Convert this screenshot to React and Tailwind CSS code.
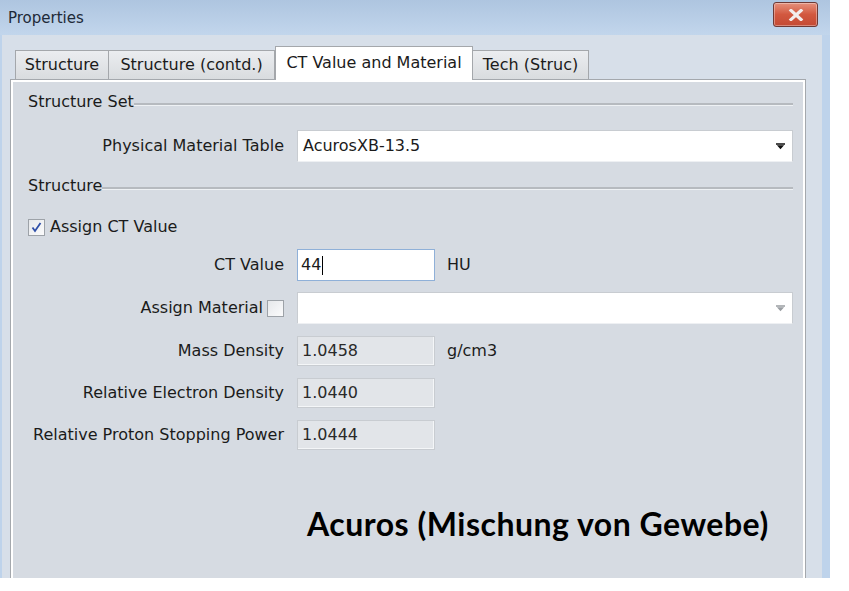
import React from 'react';

const ui = { fontFamily: '"DejaVu Sans", Tahoma, sans-serif' };

function Label({ children }) {
  return (
    <div className="w-[256px] shrink-0 text-right text-[16px] text-[#1b1b1b] whitespace-nowrap">
      {children}
    </div>
  );
}

function Separator({ title }) {
  return (
    <div className="flex items-center h-[20px]">
      <span className="text-[16px] text-[#1b1b1b] whitespace-nowrap">{title}</span>
      <div className="flex-1 mt-[5px] h-[3px] border-t-2 border-[#b6babf] border-b border-b-[#eef1f4]" />
    </div>
  );
}

function ReadOnlyField({ value }) {
  return (
    <div className="w-[138px] h-[30px] flex items-center px-[4px] bg-[#e2e5e9] border border-[#c8ccd1] shadow-[inset_-1px_-1px_0_#f4f6f8] text-[16px] text-[#2a2a2a]">
      {value}
    </div>
  );
}

function Checkbox({ checked }) {
  return (
    <div className="w-[17px] h-[17px] border border-[#9da2a8] bg-gradient-to-br from-[#e6e8eb] to-[#fbfbfc] flex items-center justify-center">
      {checked && (
        <svg width="13" height="13" viewBox="0 0 13 13">
          <path d="M2.5 6.5 L5 10 L10.5 2" fill="none" stroke="#2f4fa8" strokeWidth="1.8" />
        </svg>
      )}
    </div>
  );
}

export default function App() {
  return (
    <div className="w-[849px] h-[591px] bg-white overflow-hidden" style={ui}>
      <div className="w-[830px] h-[578px] flex flex-col bg-[#bed3eb]">
        {/* Title bar */}
        <div className="h-[35px] shrink-0 flex items-center justify-between pl-[8px] pr-[12px] bg-gradient-to-b from-[#aec5e0] to-[#c2d6ec]">
          <span className="text-[15px] text-[#1e2a38] mt-[2px]">Properties</span>
          <div className="w-[45px] h-[25px] -mt-[6px] rounded-[3px] border border-[#6e3a36] bg-gradient-to-b from-[#e5907c] via-[#d2583f] to-[#c44a34] flex items-center justify-center shadow-[inset_0_0_0_1px_rgba(255,255,255,0.35)]">
            <svg width="16" height="12" viewBox="0 0 16 12">
              <path d="M3 1.5 L13 10.5 M13 1.5 L3 10.5" stroke="#f2eeee" strokeWidth="3.2" strokeLinecap="square" />
            </svg>
          </div>
        </div>

        {/* Window body */}
        <div className="flex-1 flex pl-[2px]">
          <div className="w-[820px] bg-[#d7dfe9] pl-[8px] pr-[16px] pt-[11px] flex flex-col">
            {/* Tabs */}
            <div className="flex items-end h-[33px] pl-[5px] relative z-10 text-[16px] text-[#1b1b1b]">
              <div className="h-[29px] w-[94px] flex items-center justify-center border border-[#a4a7ab] border-b-0 bg-gradient-to-b from-[#ebedf0] to-[#d9dcdf]">Structure</div>
              <div className="h-[29px] w-[166px] flex items-center justify-center border border-[#a4a7ab] border-l-0 border-b-0 bg-gradient-to-b from-[#ebedf0] to-[#d9dcdf]">Structure (contd.)</div>
              <div className="h-[34px] w-[198px] -mb-[1px] flex items-center justify-center border border-[#a4a7ab] border-b-0 bg-white pb-[2px]">CT Value and Material</div>
              <div className="h-[29px] w-[116px] flex items-center justify-center border border-[#a4a7ab] border-l-0 border-b-0 bg-gradient-to-b from-[#ebedf0] to-[#d9dcdf]">Tech (Struc)</div>
            </div>

            {/* Tab panel */}
            <div className="flex-1 border border-b-0 border-[#a4a8ad] bg-[#d6dbe2] shadow-[inset_2px_2px_0_#ffffff,inset_-2px_0_0_#ffffff]">
              <div className="pl-[17px] pr-[12px] pt-[12px] flex flex-col text-[#1b1b1b]">
                <Separator title="Structure Set" />

                <div className="flex items-center gap-[13px] mt-[18px]">
                  <Label>Physical Material Table</Label>
                  <div className="flex-1 h-[32px] flex items-center justify-between pl-[5px] pr-[7px] bg-white border border-[#c8ccd1] border-b-[#eef0f3] text-[16px]">
                    <span>AcurosXB-13.5</span>
                    <svg width="9" height="7" viewBox="0 0 10 7">
                      <path d="M0 0 H10 V1.5 H0 Z M1 2 H9 L5 6.5 Z" fill="#111111" />
                    </svg>
                  </div>
                </div>

                <div className="mt-[14px]">
                  <Separator title="Structure" />
                </div>

                <div className="flex items-center gap-[5px] h-[20px] mt-[21px] text-[16px]">
                  <Checkbox checked />
                  <span>Assign CT Value</span>
                </div>

                <div className="flex items-center gap-[13px] mt-[12px]">
                  <Label>CT Value</Label>
                  <div className="w-[138px] h-[32px] flex items-center pl-[3px] bg-white border border-[#8fb0d8] text-[16px]">
                    <span>44</span>
                    <span className="w-px h-[19px] bg-black ml-[1px]" />
                  </div>
                  <span className="ml-[-1px] text-[16px]">HU</span>
                </div>

                <div className="flex items-center gap-[13px] mt-[11px]">
                  <div className="w-[256px] shrink-0 flex items-center justify-end gap-[4px] text-[16px] whitespace-nowrap">
                    <span>Assign Material</span>
                    <Checkbox />
                  </div>
                  <div className="flex-1 h-[32px] flex items-center justify-end pr-[7px] bg-white border border-[#c8ccd1] border-b-[#eef0f3]">
                    <svg width="9" height="7" viewBox="0 0 10 7">
                      <path d="M0 0 H10 V1.5 H0 Z M1 2 H9 L5 6.5 Z" fill="#9a9ea3" />
                    </svg>
                  </div>
                </div>

                <div className="flex items-center gap-[13px] mt-[12px]">
                  <Label>Mass Density</Label>
                  <ReadOnlyField value="1.0458" />
                  <span className="ml-[-1px] text-[16px]">g/cm3</span>
                </div>

                <div className="flex items-center gap-[13px] mt-[12px]">
                  <Label>Relative Electron Density</Label>
                  <ReadOnlyField value="1.0440" />
                </div>

                <div className="flex items-center gap-[13px] mt-[12px]">
                  <Label>Relative Proton Stopping Power</Label>
                  <ReadOnlyField value="1.0444" />
                </div>

                <div
                  className="mt-[54px] ml-[279px] text-[32px] font-bold tracking-[0.5px] text-black whitespace-nowrap leading-[40px]"
                  style={{ fontFamily: 'Lato, "Open Sans", sans-serif' }}
                >
                  Acuros (Mischung von Gewebe)
                </div>
              </div>
            </div>
          </div>
        </div>
      </div>
    </div>
  );
}
